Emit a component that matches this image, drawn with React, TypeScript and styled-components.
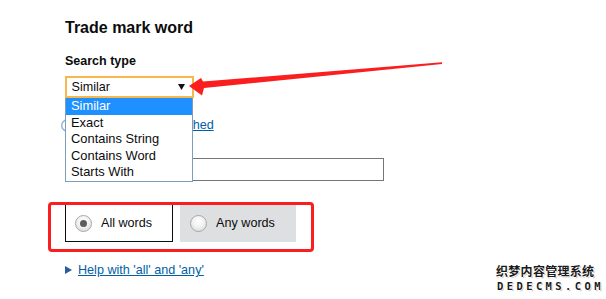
import styled, { createGlobalStyle } from "styled-components";

const GlobalStyle = createGlobalStyle`
  html, body {
    margin: 0;
    padding: 0;
    background: #ffffff;
  }
  body {
    font-family: "Liberation Sans", Arial, sans-serif;
    color: #0b0c0c;
  }
`;

const Page = styled.div`
  position: relative;
  width: 606px;
  height: 299px;
  overflow: hidden;
  box-sizing: border-box;
  padding: 18px 0 0 65px;
  background: #ffffff;
`;

const Title = styled.h2`
  margin: 0;
  font-size: 16px;
  line-height: 20px;
  font-weight: 700;
`;

const Label = styled.div`
  margin-top: 15.7px;
  font-size: 12.5px;
  line-height: 15px;
  font-weight: 700;
`;

const SelectWrap = styled.div`
  position: relative;
  z-index: 2;
  width: 129px;
  margin-top: 7.5px;
  margin-left: -0.5px;
`;

const SelectBox = styled.div`
  display: flex;
  align-items: center;
  justify-content: space-between;
  box-sizing: border-box;
  height: 22px;
  padding: 0 7px 1px 5px;
  border: 2px solid #f6b84c;
  background: #ffffff;
  font-size: 12.6px;
`;

const List = styled.ul`
  position: absolute;
  top: 22px;
  left: 0.5px;
  width: 128px;
  box-sizing: border-box;
  margin: 0;
  padding: 0;
  list-style: none;
  border: 1px solid #7f9db9;
  border-top: none;
  background: #ffffff;
`;

const Option = styled.li<{ $active?: boolean }>`
  height: 16.5px;
  line-height: 16.5px;
  padding-left: 5px;
  font-size: 12.9px;
  color: ${(p) => (p.$active ? "#ffffff" : "#0b0c0c")};
  background: ${(p) => (p.$active ? "#1e90ff" : "transparent")};
`;

const LinkRow = styled.div<{ $top: number }>`
  display: flex;
  align-items: center;
  gap: 6px;
  margin-top: ${(p) => p.$top}px;
  font-size: 12.6px;
  line-height: 16px;
`;

const Link = styled.a`
  color: #005ea5;
  text-decoration: underline;
  text-underline-offset: 1px;
`;

const TextInput = styled.input`
  display: block;
  box-sizing: border-box;
  width: 319px;
  height: 23px;
  margin-top: 25px;
  border: 1px solid #767676;
  border-radius: 0;
  background: #ffffff;
  font: inherit;
`;

const RadioGroup = styled.div`
  display: flex;
  gap: 7px;
  margin-top: 23px;
`;

const Choice = styled.label<{ $selected?: boolean }>`
  display: flex;
  align-items: center;
  gap: 9px;
  box-sizing: border-box;
  height: 38px;
  padding: 0 20px 0 9px;
  border: 1px solid ${(p) => (p.$selected ? "#0b0c0c" : "#dedfe1")};
  background: ${(p) => (p.$selected ? "#ffffff" : "#dedfe1")};
  font-size: 12.6px;
`;

const RadioDot = styled.span<{ $checked?: boolean }>`
  position: relative;
  width: 17px;
  height: 17px;
  box-sizing: border-box;
  border-radius: 50%;
  border: 1px solid #a8a8a8;
  background: radial-gradient(circle at 50% 35%, #ffffff 0%, #f2f2f2 45%, #d4d4d4 100%);

  &::after {
    content: "";
    display: ${(p) => (p.$checked ? "block" : "none")};
    position: absolute;
    top: 4px;
    left: 4px;
    width: 7px;
    height: 7px;
    border-radius: 50%;
    background: #5c5c5c;
  }
`;

const Highlight = styled.div`
  position: absolute;
  left: 48px;
  top: 202px;
  width: 266px;
  height: 50px;
  box-sizing: border-box;
  border: 3px solid #fa1e1e;
  border-radius: 4px;
  pointer-events: none;
`;

const Overlay = styled.svg`
  position: absolute;
  left: 0;
  top: 0;
  pointer-events: none;
  z-index: 3;
`;

const Watermark = styled.div`
  position: absolute;
  left: 496px;
  top: 264px;
  display: flex;
  flex-direction: column;
  gap: 4px;
  color: #1a1a1a;
  font-weight: 700;
  text-shadow: 1px 0 #fff, -1px 0 #fff, 0 1px #fff, 0 -1px #fff, 1px 1px 1px #9a9a9a;
`;

const MarkCn = styled.div`
  font-family: "Noto Sans CJK SC", sans-serif;
  font-size: 12px;
  line-height: 13px;
  letter-spacing: 0.3px;
`;

const MarkEn = styled.div`
  position: relative;
  font-family: "DejaVu Sans Mono", monospace;
  font-size: 10.5px;
  line-height: 10px;
  letter-spacing: 3.4px;
  padding-left: 1px;
  white-space: nowrap;
`;

const Flame = styled.svg`
  position: absolute;
  left: 14px;
  top: -5px;
  z-index: -1;
`;

function Triangle({ color }: { color: string }) {
  return (
    <svg width="7" height="8" viewBox="0 0 7 8">
      <path d="M0 0 L7 4 L0 8 Z" fill={color} />
    </svg>
  );
}

export default function App() {
  return (
    <>
      <GlobalStyle />
      <Page>
        <Title>Trade mark word</Title>
        <Label>Search type</Label>
        <SelectWrap>
          <SelectBox>
            <span>Similar</span>
            <svg width="7" height="6" viewBox="0 0 7 6">
              <path d="M0 0 H7 L3.5 6 Z" fill="#111" />
            </svg>
          </SelectBox>
          <List>
            <Option $active>Similar</Option>
            <Option>Exact</Option>
            <Option>Contains String</Option>
            <Option>Contains Word</Option>
            <Option>Starts With</Option>
          </List>
        </SelectWrap>

        <LinkRow $top={19}>
          <svg width="13" height="13" viewBox="0 0 13 13" style={{ marginLeft: -4 }}>
            <circle cx="6.5" cy="6.5" r="5.8" fill="none" stroke="#8fb0d8" strokeWidth="1.4" />
          </svg>
          <Link href="#">How terms are matched</Link>
        </LinkRow>

        <TextInput type="text" />

        <RadioGroup>
          <Choice $selected>
            <RadioDot $checked />
            All words
          </Choice>
          <Choice>
            <RadioDot />
            Any words
          </Choice>
        </RadioGroup>

        <LinkRow $top={20}>
          <Triangle color="#2a5b9c" />
          <Link href="#">Help with 'all' and 'any'</Link>
        </LinkRow>

        <Highlight />

        <Overlay width="606" height="299" viewBox="0 0 606 299">
          <polygon
            points="189,86 201,78 203,81.6 442,62.2 442,63.9 204,88 202,95.5"
            fill="#fa1e1e"
          />
        </Overlay>

        <Watermark>
          <MarkCn>织梦内容管理系统</MarkCn>
          <MarkEn>
            <Flame width="70" height="12" viewBox="0 0 70 12">
              <path d="M2 10 Q6 2 10 8 Q13 3 16 9" fill="none" stroke="#f08a1c" strokeWidth="2" />
              <path d="M22 10 Q27 3 31 9" fill="none" stroke="#f08a1c" strokeWidth="2" />
              <path d="M58 10 Q62 4 66 9" fill="none" stroke="#8a8a8a" strokeWidth="2" />
            </Flame>
            DEDECMS.COM
          </MarkEn>
        </Watermark>
      </Page>
    </>
  );
}
